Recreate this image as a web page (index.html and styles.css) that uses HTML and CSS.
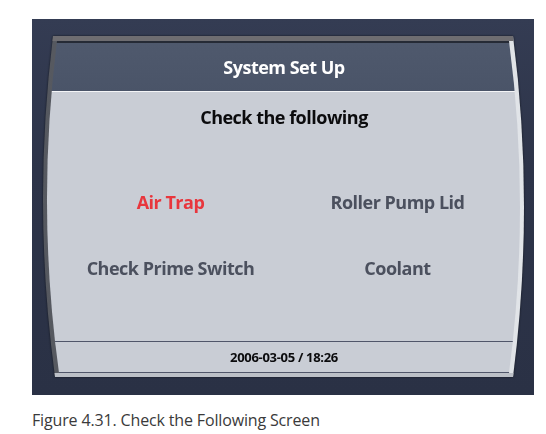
FILE: index.html
```html
<!DOCTYPE html>
<html lang="en">
<head>
<meta charset="utf-8">
<title>System Set Up</title>
<link rel="stylesheet" href="styles.css">
</head>
<body>
<div class="figure">
  <div class="device">
    <div class="bezel-wrap">
      <div class="screen">
        <div class="inner">
          <div class="header">System Set Up</div>
          <div class="body">
            <div class="title">Check the following</div>
            <div class="grid">
              <div class="item active">Air Trap</div>
              <div class="item">Roller Pump Lid</div>
              <div class="item">Check Prime Switch</div>
              <div class="item">Coolant</div>
            </div>
          </div>
          <div class="footer">2006-03-05 / 18:26</div>
        </div>
      </div>
    </div>
  </div>
  <p class="caption">Figure 4.31. Check the Following Screen</p>
</div>
</body>
</html>
```

FILE: styles.css
```css
html, body {
  margin: 0;
  padding: 0;
  background: #ffffff;
}

body {
  font-family: "Open Sans", "Liberation Sans", sans-serif;
}

.figure {
  padding: 19px 0 0 32px;
}

.device {
  width: 502px;
  height: 376px;
  box-sizing: border-box;
  padding: 17px 0 0 10px;
  background: linear-gradient(to bottom, #343c53 0%, #2d3449 40%, #2a3145 100%);
}

.bezel-wrap {
  width: 484px;
  height: 341px;
  filter: drop-shadow(0 0 1px #12161f);
}

.screen {
  width: 484px;
  height: 341px;
  box-sizing: border-box;
  padding: 5px 4px 4px 4px;
  clip-path: path("M11,0 L471,0 Q493,170.5 471,341 L13,341 Q-10,170.5 11,0 Z");
  background:
    linear-gradient(#6e6d71, #6e6d71) top / 100% 5px no-repeat,
    linear-gradient(#bcc0c7, #bcc0c7) bottom / 100% 4px no-repeat,
    linear-gradient(to right, #55585f 0%, #6a6c72 50%, #c3c7ce 51%, #e2e5e9 100%);
}

.inner {
  width: 476px;
  height: 332px;
  display: flex;
  flex-direction: column;
  clip-path: path("M11,0 L463,0 Q485,166 463,332 L13,332 Q-10,166 11,0 Z");
  border-top: 2px solid #262b36;
  box-sizing: border-box;
}

.header {
  height: 48px;
  flex: none;
  display: flex;
  align-items: center;
  justify-content: center;
  background: linear-gradient(to bottom, #4f596d, #4a5468);
  color: #ffffff;
  font-weight: 700;
  font-size: 18px;
  letter-spacing: -0.5px;
  border-bottom: 1px solid #f4f5f7;
}

.body {
  flex: 1;
  background: #c9cdd5;
  display: flex;
  flex-direction: column;
  align-items: center;
  padding-top: 14px;
  box-sizing: border-box;
}

.title {
  font-weight: 700;
  font-size: 18px;
  line-height: 22px;
  letter-spacing: -0.5px;
  color: #0b0b0d;
}

.grid {
  margin-top: 63px;
  display: grid;
  grid-template-columns: 227px 227px;
  row-gap: 44px;
}

.item {
  text-align: center;
  font-weight: 700;
  font-size: 18px;
  line-height: 22px;
  letter-spacing: -0.5px;
  color: #4b505e;
}

.item.active {
  color: #e8363d;
}

.footer {
  height: 30px;
  flex: none;
  display: flex;
  align-items: center;
  justify-content: center;
  background: #c9cdd5;
  border-top: 1px solid #50566a;
  border-bottom: 1px solid #50566a;
  font-weight: 700;
  font-size: 13px;
  letter-spacing: -0.3px;
  color: #0b0b0d;
}

.caption {
  margin: 15px 0 0 0;
  font-size: 16px;
  line-height: 20px;
  letter-spacing: -0.15px;
  color: #3a3a3a;
}
```
